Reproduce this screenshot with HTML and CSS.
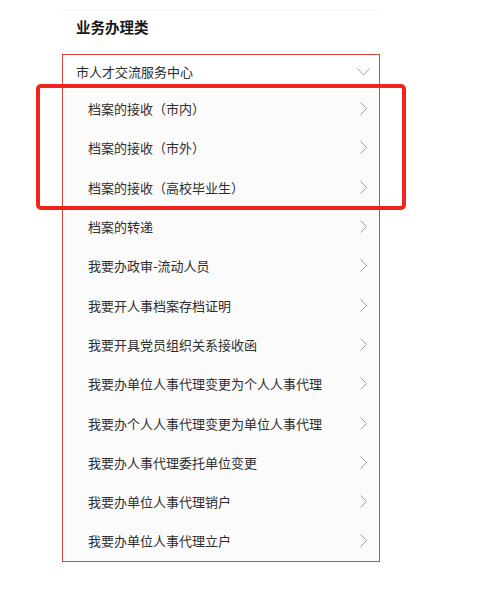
FILE: index.html
```html
<!DOCTYPE html>
<html lang="zh-CN">
<head>
  <meta charset="UTF-8">
  <meta name="viewport" content="width=device-width, initial-scale=1.0">
  <title>业务办理类</title>
  <link rel="stylesheet" href="styles.css">
</head>
<body>
  <div class="panel">
    <h2 class="section-title">业务办理类</h2>

    <div class="group">
      <div class="group-head">
        <span>市人才交流服务中心</span>
        <svg class="arrow-down" width="13" height="8" viewBox="0 0 13 8"><polyline points="0.5,0.5 6.5,7 12.5,0.5" fill="none" stroke="#a0a0a0" stroke-width="1"/></svg>
      </div>
      <ul class="items">
        <li>档案的接收（市内）<svg class="arrow" width="7" height="13" viewBox="0 0 7 13"><polyline points="0.5,0.5 6.5,6.5 0.5,12.5" fill="none" stroke="#a0a0a0" stroke-width="1"/></svg></li>
        <li>档案的接收（市外）<svg class="arrow" width="7" height="13" viewBox="0 0 7 13"><polyline points="0.5,0.5 6.5,6.5 0.5,12.5" fill="none" stroke="#a0a0a0" stroke-width="1"/></svg></li>
        <li>档案的接收（高校毕业生）<svg class="arrow" width="7" height="13" viewBox="0 0 7 13"><polyline points="0.5,0.5 6.5,6.5 0.5,12.5" fill="none" stroke="#a0a0a0" stroke-width="1"/></svg></li>
        <li>档案的转递<svg class="arrow" width="7" height="13" viewBox="0 0 7 13"><polyline points="0.5,0.5 6.5,6.5 0.5,12.5" fill="none" stroke="#a0a0a0" stroke-width="1"/></svg></li>
        <li>我要办政审-流动人员<svg class="arrow" width="7" height="13" viewBox="0 0 7 13"><polyline points="0.5,0.5 6.5,6.5 0.5,12.5" fill="none" stroke="#a0a0a0" stroke-width="1"/></svg></li>
        <li>我要开人事档案存档证明<svg class="arrow" width="7" height="13" viewBox="0 0 7 13"><polyline points="0.5,0.5 6.5,6.5 0.5,12.5" fill="none" stroke="#a0a0a0" stroke-width="1"/></svg></li>
        <li>我要开具党员组织关系接收函<svg class="arrow" width="7" height="13" viewBox="0 0 7 13"><polyline points="0.5,0.5 6.5,6.5 0.5,12.5" fill="none" stroke="#a0a0a0" stroke-width="1"/></svg></li>
        <li>我要办单位人事代理变更为个人人事代理<svg class="arrow" width="7" height="13" viewBox="0 0 7 13"><polyline points="0.5,0.5 6.5,6.5 0.5,12.5" fill="none" stroke="#a0a0a0" stroke-width="1"/></svg></li>
        <li>我要办个人人事代理变更为单位人事代理<svg class="arrow" width="7" height="13" viewBox="0 0 7 13"><polyline points="0.5,0.5 6.5,6.5 0.5,12.5" fill="none" stroke="#a0a0a0" stroke-width="1"/></svg></li>
        <li>我要办人事代理委托单位变更<svg class="arrow" width="7" height="13" viewBox="0 0 7 13"><polyline points="0.5,0.5 6.5,6.5 0.5,12.5" fill="none" stroke="#a0a0a0" stroke-width="1"/></svg></li>
        <li>我要办单位人事代理销户<svg class="arrow" width="7" height="13" viewBox="0 0 7 13"><polyline points="0.5,0.5 6.5,6.5 0.5,12.5" fill="none" stroke="#a0a0a0" stroke-width="1"/></svg></li>
        <li>我要办单位人事代理立户<svg class="arrow" width="7" height="13" viewBox="0 0 7 13"><polyline points="0.5,0.5 6.5,6.5 0.5,12.5" fill="none" stroke="#a0a0a0" stroke-width="1"/></svg></li>
      </ul>
    </div>
  </div>

  <!-- highlight mark drawn over the first three items -->
  <div class="highlight"></div>
</body>
</html>
```

FILE: styles.css
```css
body {
  margin: 0;
  background: #fff;
  font-family: "Noto Sans CJK SC", "Noto Sans", sans-serif;
  color: #333;
}
.panel {
  width: 318px;
  margin: 10px 0 0 62px;
  border-top: 1px solid #f4f4f4;
}
.section-title {
  margin: 0;
  padding: 6px 0 0 14px;
  height: 43px;
  box-sizing: border-box;
  font-size: 14.5px;
  font-weight: bold;
  color: #1a1a1a;
  line-height: 20px;
}
.group {
  width: 316px;
  border: 1.5px solid #d8453f;
  background: #fbfbfb;
}
.group-head {
  display: flex;
  align-items: center;
  justify-content: space-between;
  height: 34px;
  padding: 0 9px 0 13px;
  font-size: 13px;
  color: #2b2b2b;
  background: #fff;
}
.group-head span {
  margin-top: -2px;
}
.items {
  list-style: none;
  margin: 0;
  padding: 0;
}
.items li {
  display: flex;
  align-items: center;
  justify-content: space-between;
  height: 39.3px;
  padding: 0 12px 0 25px;
  font-size: 13px;
  color: #2e2e2e;
}
.highlight {
  position: absolute;
  left: 36px;
  top: 84px;
  width: 362px;
  height: 118px;
  border: 4px solid #f2231c;
  border-radius: 5px;
}
```
